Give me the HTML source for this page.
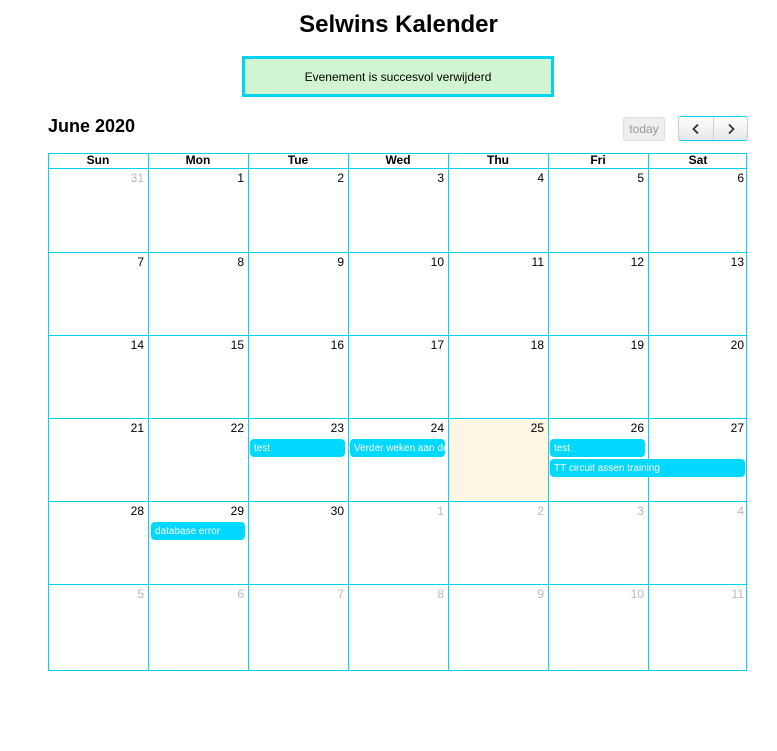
<!DOCTYPE html>
<html><head><style>
body{margin:0;width:777px;height:751px;background:#fff;font-family:"Liberation Sans",Arial,sans-serif;position:relative;overflow:hidden}
.a{position:absolute}
h1{position:absolute;left:0;width:797px;top:11px;margin:0;text-align:center;font-size:24px;font-weight:bold}
.alert{left:242px;top:56px;width:306px;height:35px;border:3px solid #00d4f0;background:#d2f5d1;font-size:12px;text-align:center;line-height:36px}
.grid{left:48px;top:153px;width:699px;height:518px;border:1px solid #00d4f0;box-sizing:border-box}
.hl{position:absolute;left:48px;width:699px;height:1px;background:#00d4f0}
.vl{position:absolute;top:153px;height:518px;width:1px;background:#00d4f0}
.dh{position:absolute;top:153px;height:15px;width:100px;text-align:center;font-size:12px;font-weight:bold;line-height:15px}
.n{position:absolute;font-size:12px;text-align:right;width:96px}
.o{color:#bbb}
.ev{position:absolute;height:18px;background:#00d8ff;border-radius:4px;color:#fff;font-size:10px;line-height:20px;padding-left:4px;box-sizing:border-box;overflow:hidden;white-space:nowrap}
</style></head><body>
<h1>Selwins Kalender</h1>
<div class="a alert">Evenement is succesvol verwijderd</div>
<div class="a" style="left:48px;top:116px;font-size:18px;font-weight:bold">June 2020</div>
<div class="a" style="left:623px;top:117px;width:42px;height:24px;box-sizing:border-box;border:1px solid #ddd;border-radius:3px;background:#eee;color:#999;font-size:12px;text-align:center;line-height:22px">today</div>
<div class="a" style="left:678px;top:116px;width:70px;height:25px;box-sizing:border-box;border:1px solid #ccc;border-top:1px solid #00d4f0;border-bottom:1px solid #00d4f0;border-radius:3px;background:linear-gradient(#fff,#e8e8e8)">
<div class="a" style="left:34px;top:0;width:1px;height:23px;background:#ccc"></div>
<svg class="a" style="left:12px;top:6px" width="10" height="12"><path d="M7 1.5L2.5 6L7 10.5" stroke="#333" stroke-width="1.8" fill="none"/></svg>
<svg class="a" style="left:47px;top:6px" width="10" height="12"><path d="M3 1.5L7.5 6L3 10.5" stroke="#333" stroke-width="1.8" fill="none"/></svg>
</div>
<div class="a grid"></div>
<div class="a" style="left:448px;top:418px;width:100px;height:83px;background:#fdf7e3"></div>
<div class="hl" style="top:168px"></div><div class="hl" style="top:252px"></div><div class="hl" style="top:335px"></div><div class="hl" style="top:418px"></div><div class="hl" style="top:501px"></div><div class="hl" style="top:584px"></div>
<div class="vl" style="left:148px"></div><div class="vl" style="left:248px"></div><div class="vl" style="left:348px"></div><div class="vl" style="left:448px"></div><div class="vl" style="left:548px"></div><div class="vl" style="left:648px"></div>
<div class="dh" style="left:48px">Sun</div><div class="dh" style="left:148px">Mon</div><div class="dh" style="left:248px">Tue</div><div class="dh" style="left:348px">Wed</div><div class="dh" style="left:448px">Thu</div><div class="dh" style="left:548px">Fri</div><div class="dh" style="left:648px">Sat</div>
<div id="nums"></div>
<script>
var tops=[171,255,338,421,504,587],L=[48,148,248,348,448,548,648],h='';
var d=[[31,1,2,3,4,5,6],[7,8,9,10,11,12,13],[14,15,16,17,18,19,20],[21,22,23,24,25,26,27],[28,29,30,1,2,3,4],[5,6,7,8,9,10,11]];
for(var r=0;r<6;r++)for(var c=0;c<7;c++){var o=(r==0&&c==0)||(r==4&&c>2)||r==5;h+='<div class="n'+(o?' o':'')+'" style="left:'+L[c]+'px;top:'+tops[r]+'px">'+d[r][c]+'</div>';}
document.getElementById('nums').innerHTML=h;
</script>
<div class="ev" style="left:250px;top:439px;width:95px">test</div>
<div class="ev" style="left:350px;top:439px;width:95px">Verder weken aan de</div>
<div class="ev" style="left:550px;top:439px;width:95px">test</div>
<div class="ev" style="left:550px;top:459px;width:195px">TT circuit assen training</div>
<div class="ev" style="left:151px;top:522px;width:94px">database error</div>
</body></html>
